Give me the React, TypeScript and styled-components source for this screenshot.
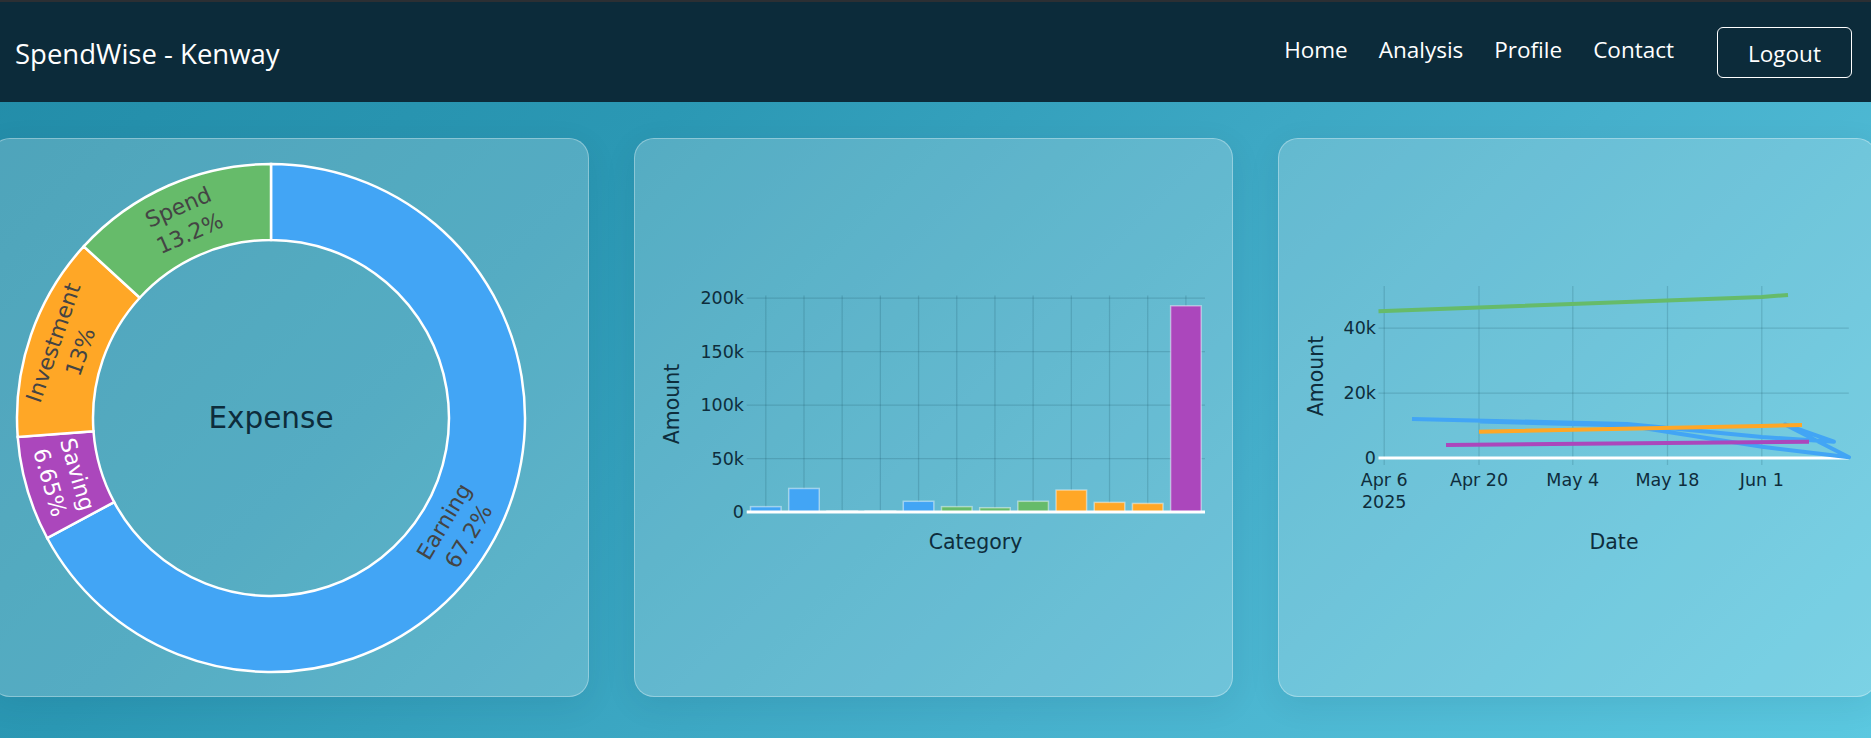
import React from "react";
import styled, { createGlobalStyle } from "styled-components";

const GlobalStyle = createGlobalStyle`
  html, body { margin: 0; padding: 0; }
  body {
    font-family: "Open Sans", "Noto Sans", sans-serif;
    overflow: hidden;
  }
  #root { min-height: 100vh; }
`;

const Page = styled.div`
  min-height: 100vh;
  overflow: hidden;
  background: linear-gradient(135deg, #228ca8 0%, #2b98b4 30%, #46b0cc 66%, #5bc8e0 100%);
`;

const NavBar = styled.header`
  height: 102px;
  box-sizing: border-box;
  border-top: 2px solid #2c2f33;
  background: #0c2b3a;
  display: flex;
  align-items: center;
  justify-content: space-between;
  padding: 0 19px 0 15px;
`;

const Brand = styled.div`
  color: #ffffff;
  font-size: 27.5px;
  line-height: 1;
  padding-top: 4px;
`;

const NavGroup = styled.nav`
  display: flex;
  align-items: center;
`;

const NavList = styled.ul`
  display: flex;
  gap: 31px;
  list-style: none;
  margin: 0 43px 0 0;
  padding: 0 0 6px 0;
`;

const NavLink = styled.a`
  color: #ffffff;
  font-size: 22.5px;
  line-height: 1.2;
  text-decoration: none;
`;

const LogoutButton = styled.button`
  width: 135px;
  height: 51px;
  border: 1px solid #ffffff;
  border-radius: 6px;
  background: transparent;
  color: #ffffff;
  font-family: inherit;
  font-size: 22.5px;
  padding: 2px 0 0 0;
`;

const CardRow = styled.main`
  display: flex;
  gap: 45px;
  margin-left: -10px;
  padding-top: 36px;
`;

const Card = styled.section`
  flex: none;
  width: 599px;
  height: 559px;
  box-sizing: border-box;
  border-radius: 20px;
  background: rgba(255, 255, 255, 0.2);
  border: 1px solid rgba(255, 255, 255, 0.32);
  box-shadow: 0 8px 32px rgba(0, 40, 60, 0.08);
  overflow: hidden;
`;

const ChartSvg = styled.svg`
  display: block;
  width: 597px;
  height: 557px;
`;

const ChartText = styled.text`
  font-family: "DejaVu Sans", Verdana, sans-serif;
`;

const TickLabel = styled(ChartText)`
  font-size: 17.5px;
  fill: #0e2d3c;
`;

const AxisTitle = styled(ChartText)`
  font-size: 20.5px;
  fill: #0e2d3c;
`;

const SliceLabel = styled(ChartText)<{ $light?: boolean }>`
  font-size: 22px;
  fill: ${(p) => (p.$light ? "#ffffff" : "#444444")};
`;

const CenterLabel = styled(ChartText)`
  font-size: 29.5px;
  fill: #0d2c3b;
`;

const GridLine = styled.line`
  stroke: rgba(10, 60, 80, 0.17);
  stroke-width: 1.25;
`;

const ZeroLine = styled.line`
  stroke: #ffffff;
  stroke-width: 3;
`;

const Slice = styled.path<{ $color: string }>`
  fill: ${(p) => p.$color};
  stroke: #ffffff;
  stroke-width: 2.5;
`;

const Bar = styled.rect<{ $color: string }>`
  fill: ${(p) => p.$color};
  stroke: rgba(255, 255, 255, 0.45);
  stroke-width: 1.5;
`;

const Trace = styled.polyline<{ $color: string }>`
  fill: none;
  stroke: ${(p) => p.$color};
  stroke-width: 4;
  stroke-linejoin: round;
`;

const BLUE = "#42a5f5";
const GREEN = "#66bb6a";
const ORANGE = "#ffa726";
const PURPLE = "#ab47bc";

/* ---------- Donut ---------- */
const CX = 271;
const CY = 418;
const R_OUT = 254;
const R_IN = 178;

const pt = (r: number, deg: number) => {
  const a = (deg * Math.PI) / 180;
  return [CX + r * Math.sin(a), CY - r * Math.cos(a)];
};

const arcPath = (a0: number, a1: number) => {
  const large = a1 - a0 > 180 ? 1 : 0;
  const [x0, y0] = pt(R_OUT, a0);
  const [x1, y1] = pt(R_OUT, a1);
  const [x2, y2] = pt(R_IN, a1);
  const [x3, y3] = pt(R_IN, a0);
  return `M${x0},${y0} A${R_OUT},${R_OUT} 0 ${large} 1 ${x1},${y1} L${x2},${y2} A${R_IN},${R_IN} 0 ${large} 0 ${x3},${y3} Z`;
};

const slices = [
  { name: "Earning", pct: "67.2%", frac: 0.672, color: BLUE, light: false },
  { name: "Saving", pct: "6.65%", frac: 0.0665, color: PURPLE, light: true },
  { name: "Investment", pct: "13%", frac: 0.13, color: ORANGE, light: false },
  { name: "Spend", pct: "13.2%", frac: 0.132, color: GREEN, light: false },
];

const DonutChart: React.FC = () => {
  const total = slices.reduce((s, x) => s + x.frac, 0);
  let acc = 0;
  const parts = slices.map((s) => {
    const a0 = (acc / total) * 360;
    acc += s.frac;
    const a1 = (acc / total) * 360;
    const mid = (a0 + a1) / 2;
    let rot = mid;
    if (rot > 90 && rot <= 270) rot -= 180;
    else if (rot > 270) rot -= 360;
    const [lx, ly] = pt((R_OUT + R_IN) / 2, mid);
    return { ...s, a0, a1, rot, lx, ly };
  });
  return (
    <ChartSvg viewBox="-9 139 597 557">
      {parts.map((p) => (
        <Slice key={p.name} d={arcPath(p.a0, p.a1)} $color={p.color} />
      ))}
      {parts.map((p) => (
        <g key={p.name + "-t"} transform={`translate(${p.lx} ${p.ly}) rotate(${p.rot})`}>
          <SliceLabel $light={p.light} x={0} y={-14.3} textAnchor="middle" dominantBaseline="central">
            {p.name}
          </SliceLabel>
          <SliceLabel $light={p.light} x={0} y={14.3} textAnchor="middle" dominantBaseline="central">
            {p.pct}
          </SliceLabel>
        </g>
      ))}
      <CenterLabel x={CX} y={CY} textAnchor="middle" dominantBaseline="central">
        Expense
      </CenterLabel>
    </ChartSvg>
  );
};

/* ---------- Bar chart ---------- */
const B_LEFT = 746.7;
const B_RIGHT = 1205;
const B_ZERO = 512;
const B_TOP = 295.5;
const B_PER_K = 53.5 / 50;
const B_STEP = (B_RIGHT - B_LEFT) / 12;

const bars = [
  { v: 5, c: BLUE },
  { v: 22, c: BLUE },
  { v: 0.4, c: BLUE },
  { v: 0.4, c: BLUE },
  { v: 10, c: BLUE },
  { v: 5, c: GREEN },
  { v: 4, c: GREEN },
  { v: 10, c: GREEN },
  { v: 20.5, c: ORANGE },
  { v: 9, c: ORANGE },
  { v: 8, c: ORANGE },
  { v: 192.7, c: PURPLE },
];

const BarChart: React.FC = () => (
  <ChartSvg viewBox="635 139 597 557">
    {bars.map((_, i) => {
      const x = B_LEFT + B_STEP * (i + 0.5);
      return <GridLine key={"v" + i} x1={x} x2={x} y1={B_TOP} y2={B_ZERO} />;
    })}
    {[50, 100, 150, 200].map((k) => {
      const y = B_ZERO - k * B_PER_K;
      return <GridLine key={"h" + k} x1={B_LEFT} x2={B_RIGHT} y1={y} y2={y} />;
    })}
    {bars.map((b, i) => {
      const w = B_STEP * 0.8;
      const x = B_LEFT + B_STEP * (i + 0.5) - w / 2;
      const h = Math.max(b.v * B_PER_K, 1);
      return <Bar key={"b" + i} x={x} y={B_ZERO - h} width={w} height={h} $color={b.c} />;
    })}
    <ZeroLine x1={B_LEFT} x2={B_RIGHT} y1={B_ZERO} y2={B_ZERO} />
    {[0, 50, 100, 150, 200].map((k) => (
      <TickLabel key={"t" + k} x={744} y={B_ZERO - k * B_PER_K} textAnchor="end" dominantBaseline="central">
        {k === 0 ? "0" : `${k}k`}
      </TickLabel>
    ))}
    <AxisTitle x={672} y={404} textAnchor="middle" dominantBaseline="central" transform="rotate(-90 672 404)">
      Amount
    </AxisTitle>
    <AxisTitle x={975.5} y={542} textAnchor="middle" dominantBaseline="central">
      Category
    </AxisTitle>
  </ChartSvg>
);

/* ---------- Line chart ---------- */
const L_LEFT = 1378.5;
const L_RIGHT = 1848.8;
const L_TOP = 286;
const L_BOTTOM = 465;
const L_ZERO = 458;
const L_PER_K = 65 / 20;

const xTicks = [
  { x: 1384.2, l: "Apr 6", y2: "2025" },
  { x: 1479, l: "Apr 20" },
  { x: 1572.8, l: "May 4" },
  { x: 1667.5, l: "May 18" },
  { x: 1761.8, l: "Jun 1" },
];

const traces = [
  { c: GREEN, pts: "1378.5,311.3 1761.8,297 1788,295" },
  { c: BLUE, pts: "1412,419 1627,424 1762,437 1834,441.7 1785,424.5 1849,457.3 1762,446.7 1627,425.5 1480,421.5" },
  { c: ORANGE, pts: "1479,431.7 1761,426 1802,425" },
  { c: PURPLE, pts: "1446,445 1809,441.7" },
];

const LineChart: React.FC = () => (
  <ChartSvg viewBox="1279 139 597 557">
    {xTicks.map((t) => (
      <GridLine key={"v" + t.l} x1={t.x} x2={t.x} y1={L_TOP} y2={L_BOTTOM} />
    ))}
    {[20, 40].map((k) => {
      const y = L_ZERO - k * L_PER_K;
      return <GridLine key={"h" + k} x1={L_LEFT} x2={L_RIGHT} y1={y} y2={y} />;
    })}
    <ZeroLine x1={L_LEFT} x2={L_RIGHT} y1={L_ZERO} y2={L_ZERO} />
    {traces.map((t, i) => (
      <Trace key={"tr" + i} points={t.pts} $color={t.c} />
    ))}
    {[0, 20, 40].map((k) => (
      <TickLabel key={"t" + k} x={1376} y={L_ZERO - k * L_PER_K} textAnchor="end" dominantBaseline="central">
        {k === 0 ? "0" : `${k}k`}
      </TickLabel>
    ))}
    {xTicks.map((t) => (
      <React.Fragment key={"xl" + t.l}>
        <TickLabel x={t.x} y={479.7} textAnchor="middle" dominantBaseline="central">
          {t.l}
        </TickLabel>
        {t.y2 && (
          <TickLabel x={t.x} y={502} textAnchor="middle" dominantBaseline="central">
            {t.y2}
          </TickLabel>
        )}
      </React.Fragment>
    ))}
    <AxisTitle x={1316} y={376} textAnchor="middle" dominantBaseline="central" transform="rotate(-90 1316 376)">
      Amount
    </AxisTitle>
    <AxisTitle x={1614} y={542} textAnchor="middle" dominantBaseline="central">
      Date
    </AxisTitle>
  </ChartSvg>
);

const navItems = ["Home", "Analysis", "Profile", "Contact"];

export default function App() {
  return (
    <>
      <GlobalStyle />
      <Page>
        <NavBar>
          <Brand>SpendWise - Kenway</Brand>
          <NavGroup>
            <NavList>
              {navItems.map((n) => (
                <li key={n}>
                  <NavLink href="#">{n}</NavLink>
                </li>
              ))}
            </NavList>
            <LogoutButton type="button">Logout</LogoutButton>
          </NavGroup>
        </NavBar>
        <CardRow>
          <Card>
            <DonutChart />
          </Card>
          <Card>
            <BarChart />
          </Card>
          <Card>
            <LineChart />
          </Card>
        </CardRow>
      </Page>
    </>
  );
}
